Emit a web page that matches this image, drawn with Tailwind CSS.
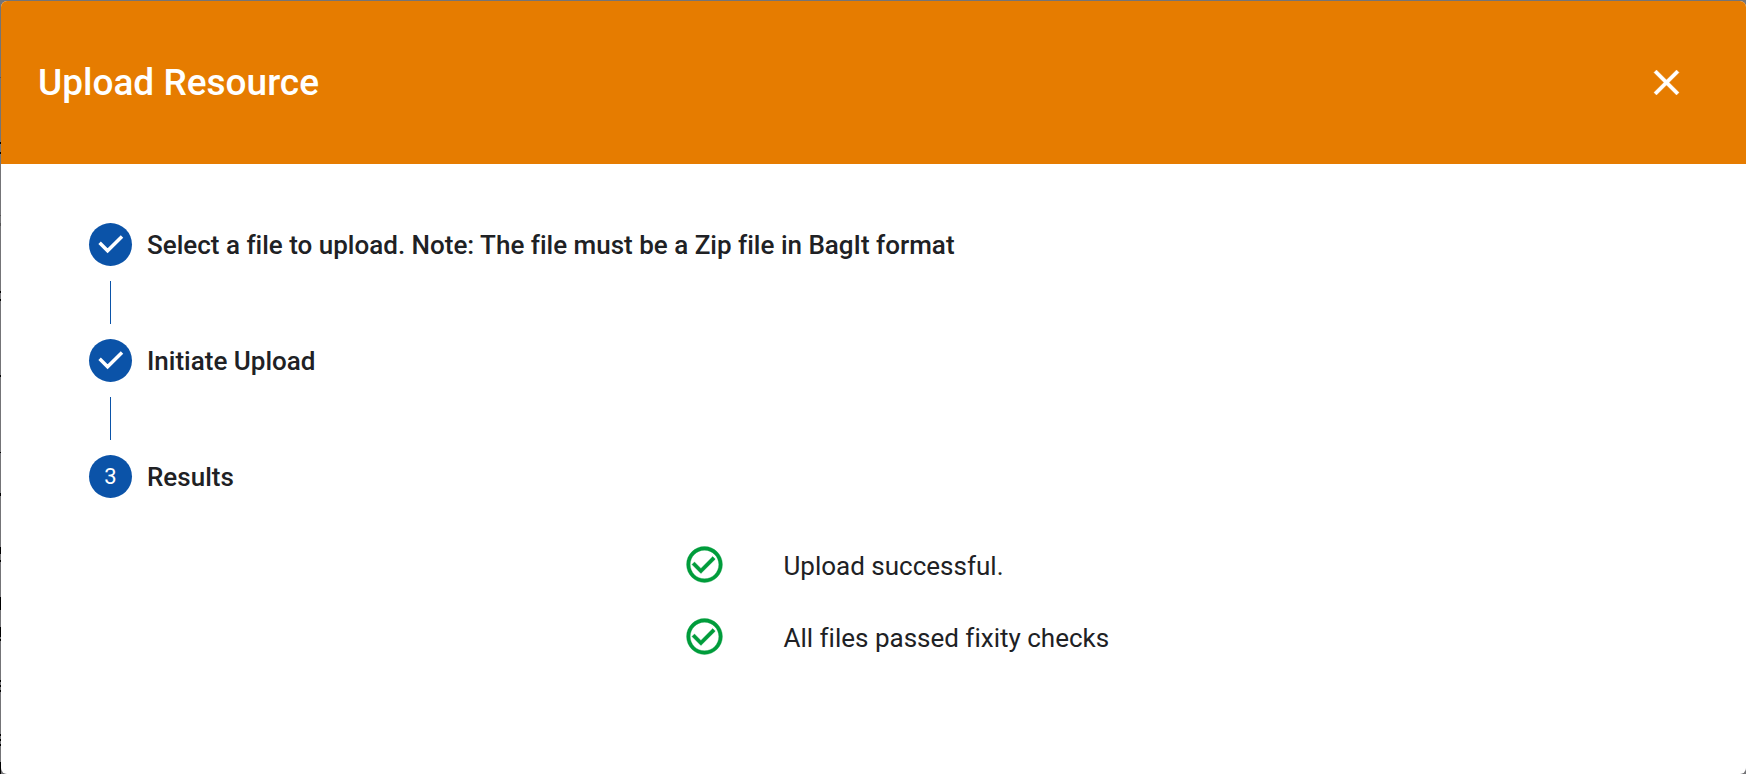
<!DOCTYPE html>
<html lang="en">
<head>
<meta charset="utf-8">
<meta name="viewport" content="width=device-width, initial-scale=1">
<title>Upload Resource</title>
<script src="https://cdn.jsdelivr.net/npm/@tailwindcss/browser@4"></script>
</head>
<body class="min-h-screen bg-[#747477] pl-px pt-px font-['Roboto',sans-serif] text-[#202124] [font-variant-ligatures:none] flex flex-col">
<!-- Page content peeking out behind the dialog's left edge -->
<svg class="absolute left-0 top-0 h-[774px] w-px" viewBox="0 0 1 774" shape-rendering="crispEdges" aria-hidden="true">
<path fill="#555" d="M0 77h1v1H0zM0 215h1v1H0zM0 223h1v3H0z"/>
<path fill="#000" d="M0 142h1v2H0zM0 152h1v2H0zM0 291h1v2H0zM0 299h1v2H0zM0 375h1v2H0zM0 452h1v1H0zM0 493h1v3H0zM0 547h1v7H0zM0 560h1v2H0zM0 597h1v13H0zM0 627h1v10H0zM0 639h1v2H0zM0 680h1v2H0zM0 685h1v2H0zM0 690h1v2H0zM0 734h1v2H0zM0 739h1v2H0zM0 744h1v2H0zM0 762h1v12H0z"/>
</svg>
<main role="dialog" aria-labelledby="dialog-title" class="flex-1 overflow-hidden rounded-md bg-white">
  <header class="flex h-[163px] items-center justify-between bg-[#e67c00] pl-[37px] pr-[58px] text-white">
    <h1 id="dialog-title" class="text-[37px] leading-10 font-medium">Upload Resource</h1>
    <button type="button" aria-label="Close" class="cursor-pointer">
      <svg class="size-[43px]" viewBox="0 0 24 24" fill="currentColor" stroke="currentColor" stroke-width=".2" aria-hidden="true"><path d="M19 6.41L17.59 5 12 10.59 6.41 5 5 6.41 10.59 12 5 17.59 6.41 19 12 13.41 17.59 19 19 17.59 13.41 12 19 6.41z"/></svg>
    </button>
  </header>
  <div class="pl-[88px] pr-[100px] pt-[59px]">
    <ol>
      <li>
        <div class="flex items-center gap-[15px]">
          <svg class="size-[43px] shrink-0 rounded-full bg-[#0b53a8]" viewBox="0 0 43 43" fill="none" stroke="#fff" stroke-width="3.5" role="img" aria-label="Completed"><path d="M10.6 19.8l8 8L33 13.6"/></svg>
          <span class="text-[26px] leading-8 font-medium">Select a file to upload. Note: The file must be a Zip file in BagIt format</span>
        </div>
        <div class="my-[15px] ml-[21px] h-[43px] w-px bg-[#0b53a8]"></div>
      </li>
      <li>
        <div class="flex items-center gap-[15px]">
          <svg class="size-[43px] shrink-0 rounded-full bg-[#0b53a8]" viewBox="0 0 43 43" fill="none" stroke="#fff" stroke-width="3.5" role="img" aria-label="Completed"><path d="M10.6 19.8l8 8L33 13.6"/></svg>
          <span class="text-[26px] leading-8 font-medium">Initiate Upload</span>
        </div>
        <div class="my-[15px] ml-[21px] h-[43px] w-px bg-[#0b53a8]"></div>
      </li>
      <li aria-current="step">
        <div class="flex items-center gap-[15px]">
          <span class="flex size-[43px] shrink-0 items-center justify-center rounded-full bg-[#0b53a8] text-[22px] leading-8 text-white">3</span>
          <span class="text-[26px] leading-8 font-medium">Results</span>
        </div>
        <div class="ml-[58px] mt-[45px] flex justify-center">
          <ul class="flex w-[428px] flex-col gap-[29px]">
            <li class="flex items-center gap-[58px]">
              <svg class="size-[43px] shrink-0 fill-[#009c3b] stroke-[#009c3b]" stroke-width=".2" viewBox="0 0 24 24" aria-hidden="true"><path d="M16.59 7.58L10 14.17l-3.59-3.58L5 12l5 5 8-8zM12 2C6.48 2 2 6.48 2 12s4.48 10 10 10 10-4.48 10-10S17.52 2 12 2zm0 18c-4.42 0-8-3.58-8-8s3.58-8 8-8 8 3.58 8 8-3.58 8-8 8z"/></svg>
              <span class="pt-0.5 text-[26px] leading-8 whitespace-nowrap">Upload successful.</span>
            </li>
            <li class="flex items-center gap-[58px]">
              <svg class="size-[43px] shrink-0 fill-[#009c3b] stroke-[#009c3b]" stroke-width=".2" viewBox="0 0 24 24" aria-hidden="true"><path d="M16.59 7.58L10 14.17l-3.59-3.58L5 12l5 5 8-8zM12 2C6.48 2 2 6.48 2 12s4.48 10 10 10 10-4.48 10-10S17.52 2 12 2zm0 18c-4.42 0-8-3.58-8-8s3.58-8 8-8 8 3.58 8 8-3.58 8-8 8z"/></svg>
              <span class="pt-0.5 text-[26px] leading-8 whitespace-nowrap">All files passed fixity checks</span>
            </li>
          </ul>
        </div>
      </li>
    </ol>
  </div>
</main>
</body>
</html>
